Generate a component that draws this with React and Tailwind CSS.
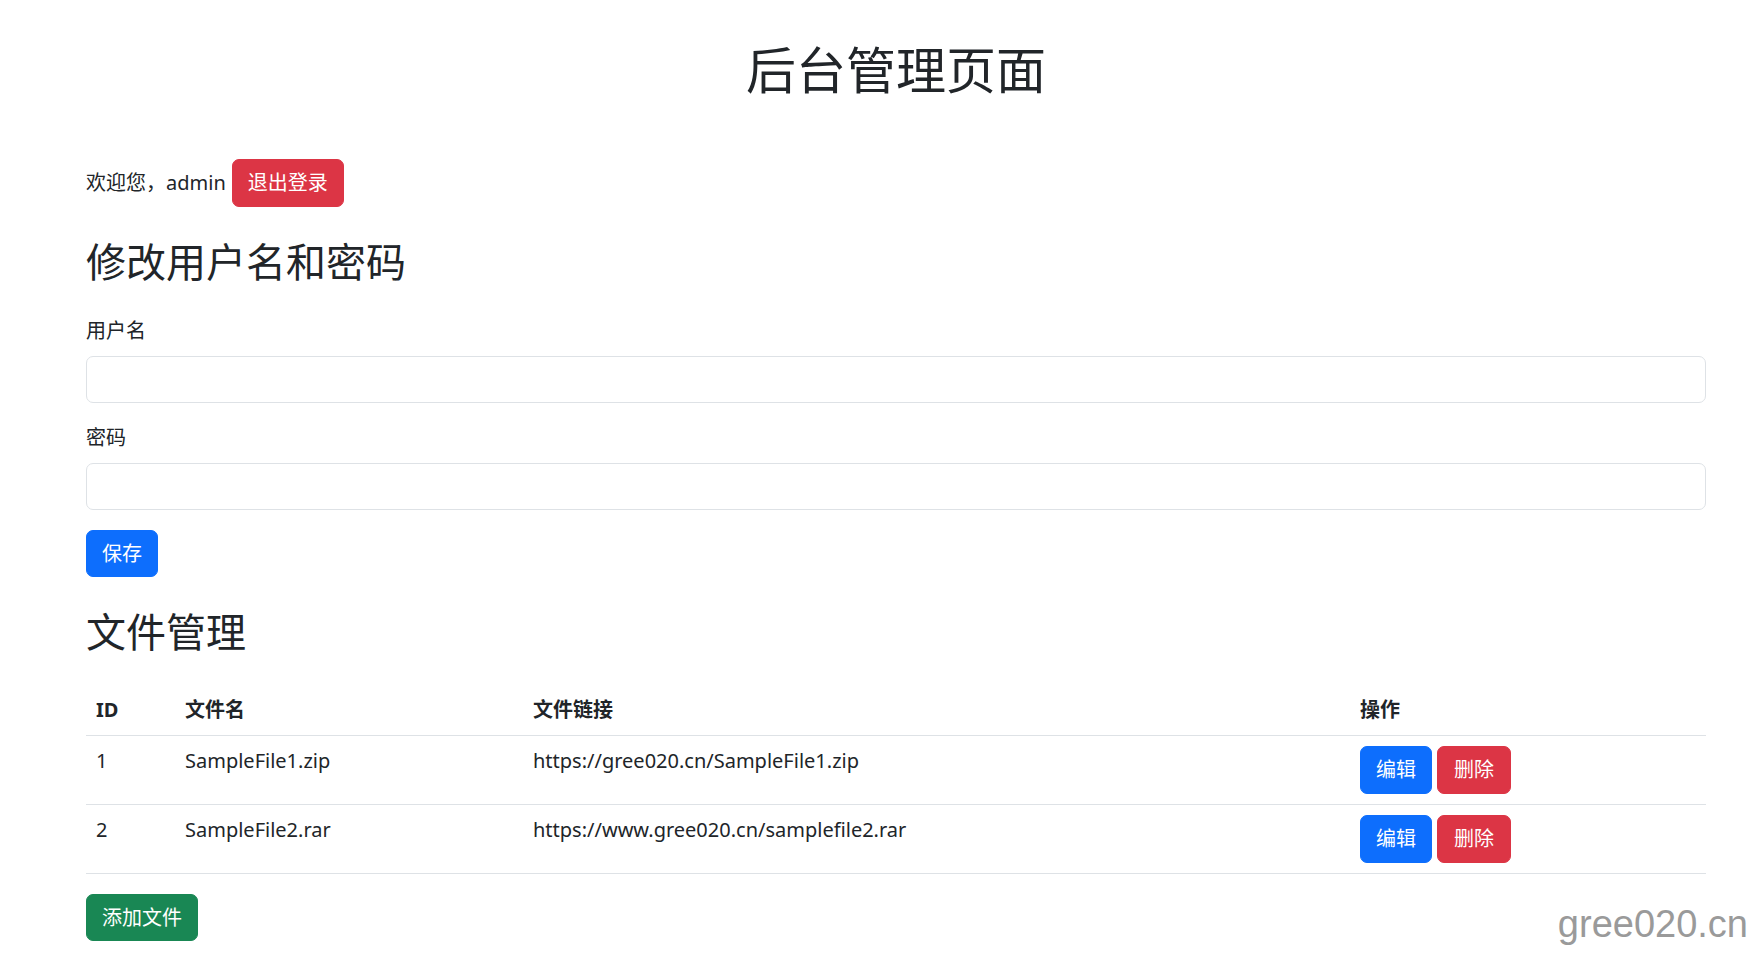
import React from "react";

const rows = [
  { id: 1, name: "SampleFile1.zip", url: "https://gree020.cn/SampleFile1.zip" },
  { id: 2, name: "SampleFile2.rar", url: "https://www.gree020.cn/samplefile2.rar" },
];

export default function App() {
  return (
    <div className="relative h-[956px] w-full overflow-hidden bg-white text-[#212529] font-['Noto_Sans','Noto_Sans_CJK_SC',sans-serif] text-[20px] leading-[30px]">
      <div className="ml-[86px] w-[1620px] pt-[40px]">
        <h1 className="text-center text-[50px] leading-[60px] font-normal mb-[59px]">后台管理页面</h1>

        <div className="flex items-center gap-[6px]">
          <span>欢迎您，admin</span>
          <button className="h-[48px] px-[15px] rounded-[7px] border border-[#dc3545] bg-[#dc3545] text-white leading-[30px]">
            退出登录
          </button>
        </div>

        <h2 className="mt-[31px] mb-[30px] text-[40px] leading-[48px] font-normal">修改用户名和密码</h2>

        <div className="mb-[20px]">
          <label className="block mb-[10px] leading-[30px]">用户名</label>
          <input className="block w-full h-[47px] rounded-[7px] border border-[#dee2e6] px-[15px] outline-none" />
        </div>
        <div className="mb-[20px]">
          <label className="block mb-[10px] leading-[30px]">密码</label>
          <input type="password" className="block w-full h-[47px] rounded-[7px] border border-[#dee2e6] px-[15px] outline-none" />
        </div>
        <button className="h-[47px] px-[15px] rounded-[7px] border border-[#0d6efd] bg-[#0d6efd] text-white leading-[30px]">
          保存
        </button>

        <h2 className="mt-[31px] mb-[29px] text-[40px] leading-[48px] font-normal">文件管理</h2>

        <table className="w-full table-fixed border-collapse mb-[20px]">
          <thead>
            <tr className="border-b border-[#dee2e6]">
              <th className="w-[89px] p-[10px] text-left font-bold leading-[30px]">ID</th>
              <th className="w-[348px] p-[10px] text-left font-bold leading-[30px]">文件名</th>
              <th className="w-[827px] p-[10px] text-left font-bold leading-[30px]">文件链接</th>
              <th className="p-[10px] text-left font-bold leading-[30px]">操作</th>
            </tr>
          </thead>
          <tbody>
            {rows.map((r) => (
              <tr key={r.id} className="border-b border-[#dee2e6]">
                <td className="p-[10px] align-top leading-[30px]">{r.id}</td>
                <td className="p-[10px] align-top leading-[30px]">{r.name}</td>
                <td className="p-[10px] align-top leading-[30px]">{r.url}</td>
                <td className="p-[10px] align-top">
                  <div className="flex gap-[5px]">
                    <button className="h-[48px] px-[15px] rounded-[7px] border border-[#0d6efd] bg-[#0d6efd] text-white leading-[30px]">
                      编辑
                    </button>
                    <button className="h-[48px] px-[16px] rounded-[7px] border border-[#dc3545] bg-[#dc3545] text-white leading-[30px]">
                      删除
                    </button>
                  </div>
                </td>
              </tr>
            ))}
          </tbody>
        </table>

        <button className="h-[47px] px-[15px] rounded-[7px] border border-[#198754] bg-[#198754] text-white leading-[30px]">
          添加文件
        </button>
      </div>

      <div className="absolute top-[905px] right-[14px] text-[38px] leading-none text-[#9a9a9a] font-['Liberation_Sans',Arial,sans-serif]">
        gree020.cn
      </div>
    </div>
  );
}
